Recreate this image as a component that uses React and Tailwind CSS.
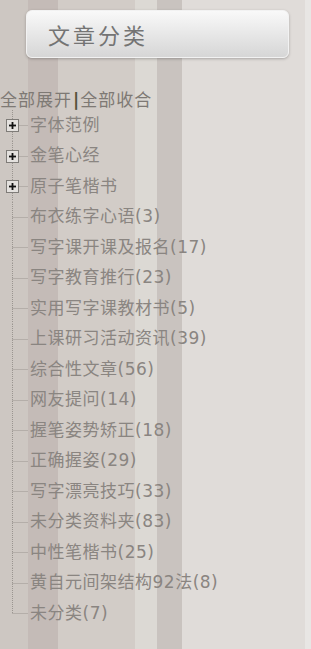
import React from 'react';

const items = [
  { label: '字体范例', folder: true },
  { label: '金笔心经', folder: true },
  { label: '原子笔楷书', folder: true },
  { label: '布衣练字心语(3)' },
  { label: '写字课开课及报名(17)' },
  { label: '写字教育推行(23)' },
  { label: '实用写字课教材书(5)' },
  { label: '上课研习活动资讯(39)' },
  { label: '综合性文章(56)' },
  { label: '网友提问(14)' },
  { label: '握笔姿势矫正(18)' },
  { label: '正确握姿(29)' },
  { label: '写字漂亮技巧(33)' },
  { label: '未分类资料夹(83)' },
  { label: '中性笔楷书(25)' },
  { label: '黄自元间架结构92法(8)' },
  { label: '未分类(7)' },
];

function Connector({ last }) {
  return (
    <svg width="28" height="30.5" viewBox="0 0 28 30.5" className="shrink-0">
      <line x1="12.5" y1="0" x2="12.5" y2={last ? 15.5 : 30.5} stroke="#9a9590" strokeWidth="1" strokeDasharray="1 1" />
      <line x1="12.5" y1="15.5" x2="28" y2="15.5" stroke="#9a9590" strokeWidth="1" strokeDasharray="1 1" />
    </svg>
  );
}

function PlusBox() {
  return (
    <span className="absolute left-[6px] top-[9px] w-[13px] h-[13px] border border-[#7f7c78] bg-[#e4e1de] flex items-center justify-center">
      <svg width="9" height="9" viewBox="0 0 9 9">
        <rect x="1" y="3.6" width="7" height="1.8" fill="#111" />
        <rect x="3.6" y="1" width="1.8" height="7" fill="#111" />
      </svg>
    </span>
  );
}

export default function App() {
  return (
    <div
      className="w-[311px] h-[649px] overflow-hidden bg-[linear-gradient(to_right,#cdc7c2_0px,#cdc7c2_28px,#c4bbb7_28px,#c4bbb7_58px,#d2ccc7_58px,#d2ccc7_135px,#dcd9d4_135px,#dcd9d4_157px,#c9c3bf_157px,#c9c3bf_182px,#e0dcd9_182px,#e0dcd9_305px,#e8e6e4_305px)]"
      style={{ fontFamily: '"DejaVu Sans", "Noto Sans CJK SC", sans-serif' }}
    >
      <div className="mt-[10px] ml-[26px] w-[263px] h-[48px] rounded-[6px] bg-gradient-to-b from-[#f9f9f9] to-[#d6d6d6] border border-[#f2f2f2] shadow-[0_1px_3px_rgba(0,0,0,0.25)] flex items-center pl-[21px]">
        <span className="text-[22px] tracking-[3px] text-[#747474]" style={{ fontFamily: '"Noto Sans CJK SC", sans-serif' }}>
          文章分类
        </span>
      </div>

      <div className="mt-[32px] h-[20px] flex items-center text-[17px] tracking-[1px] text-[#7e7974] leading-none">
        <span>全部展开</span>
        <span className="font-bold text-[#55523a] tracking-normal px-[1px]">|</span>
        <span>全部收合</span>
      </div>

      <div className="flex flex-col">
        {items.map((it, i) => (
          <div key={i} className="relative h-[30.5px] flex items-center">
            <Connector last={i === items.length - 1} />
            {it.folder && <PlusBox />}
            <span className="ml-[2px] text-[17px] tracking-[0.5px] text-[#8a8581] leading-none whitespace-nowrap">{it.label}</span>
          </div>
        ))}
      </div>
    </div>
  );
}
